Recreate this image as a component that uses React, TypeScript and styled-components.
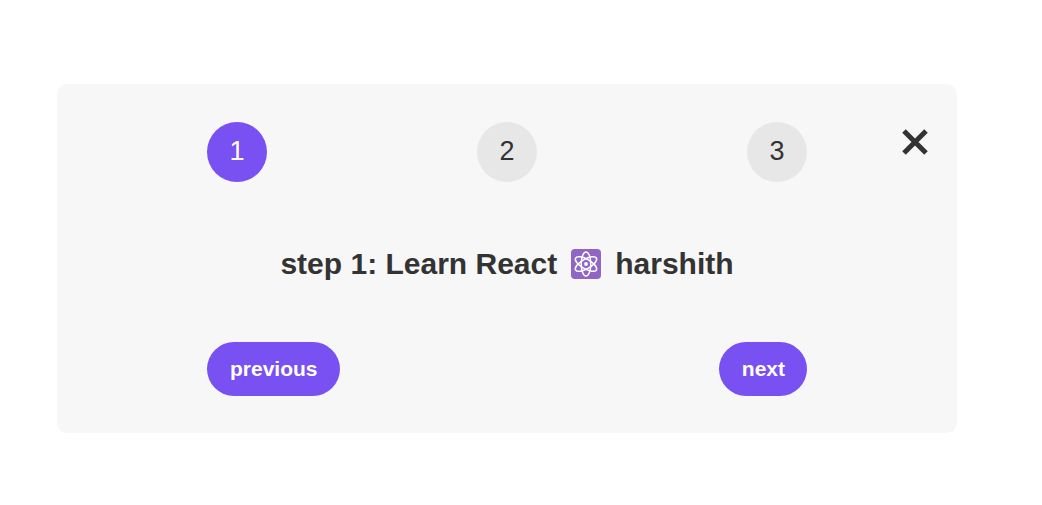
import React, { useState } from "react";
import styled, { createGlobalStyle } from "styled-components";

const GlobalStyle = createGlobalStyle`
  * {
    box-sizing: border-box;
  }

  body {
    margin: 0;
    background: #fff;
    color: #333;
    font-family: "Liberation Sans", Arial, sans-serif;
  }
`;

const Page = styled.main`
  padding: 84px 85px 72px 57px;
`;

const Card = styled.section`
  position: relative;
  max-width: 900px;
  margin: 0 auto;
  padding: 38px 150px 37px;
  border-radius: 10px;
  background: #f7f7f7;
`;

const CloseButton = styled.button`
  position: absolute;
  top: 44px;
  right: 28px;
  display: flex;
  padding: 0;
  border: none;
  background: none;
  color: #333;
  cursor: pointer;
`;

const Steps = styled.ol`
  display: flex;
  justify-content: space-between;
  margin: 0;
  padding: 0;
  list-style: none;
`;

const Step = styled.li<{ $active: boolean }>`
  display: flex;
  justify-content: center;
  width: 60px;
  height: 60px;
  padding-top: 14px;
  border-radius: 50%;
  background: ${(p) => (p.$active ? "#7950f2" : "#e7e7e7")};
  color: ${(p) => (p.$active ? "#fff" : "#333")};
  font-size: 27px;
  line-height: 31px;
`;

const Message = styled.h1`
  display: flex;
  justify-content: center;
  align-items: center;
  gap: 13px;
  margin: 62px 0 58px;
  font-size: 30px;
  font-weight: bold;
  line-height: 40px;
  white-space: nowrap;
`;

const Actions = styled.div`
  display: flex;
  justify-content: space-between;
`;

const ActionButton = styled.button`
  padding: 15px 22px 15px 23px;
  border: none;
  border-radius: 50px;
  background: #7950f2;
  color: #fff;
  font-family: inherit;
  font-size: 21px;
  font-weight: bold;
  line-height: 24px;
  cursor: pointer;
`;

const CloseIcon = () => (
  <svg width="28" height="28" viewBox="0 0 28 28" aria-hidden="true">
    <path d="M3 3L25 25M25 3L3 25" stroke="currentColor" strokeWidth="5" />
  </svg>
);

const AtomIcon = () => (
  <svg width="32" height="32" viewBox="0 0 32 32" role="img" aria-label="atom">
    <rect x="1" y="1" width="30" height="30" rx="4" fill="#8f65c5" />
    <g fill="none" stroke="#fff" strokeWidth="1.5">
      <ellipse cx="16" cy="16" rx="4.8" ry="12" />
      <ellipse cx="16" cy="16" rx="4.8" ry="12" transform="rotate(60 16 16)" />
      <ellipse cx="16" cy="16" rx="4.8" ry="12" transform="rotate(120 16 16)" />
    </g>
    <circle cx="16" cy="16" r="1.9" fill="#fff" />
  </svg>
);

const steps = [1, 2, 3];

export default function App() {
  const [step, setStep] = useState(1);
  const [open, setOpen] = useState(true);

  return (
    <>
      <GlobalStyle />
      <Page>
        {open && (
          <Card>
            <CloseButton type="button" aria-label="Close" onClick={() => setOpen(false)}>
              <CloseIcon />
            </CloseButton>
            <Steps>
              {steps.map((n) => (
                <Step key={n} $active={step >= n}>
                  {n}
                </Step>
              ))}
            </Steps>
            <Message>
              <span>step {step}: Learn React</span>
              <AtomIcon />
              <span>harshith</span>
            </Message>
            <Actions>
              <ActionButton type="button" onClick={() => setStep(Math.max(1, step - 1))}>
                previous
              </ActionButton>
              <ActionButton type="button" onClick={() => setStep(Math.min(3, step + 1))}>
                next
              </ActionButton>
            </Actions>
          </Card>
        )}
      </Page>
    </>
  );
}
